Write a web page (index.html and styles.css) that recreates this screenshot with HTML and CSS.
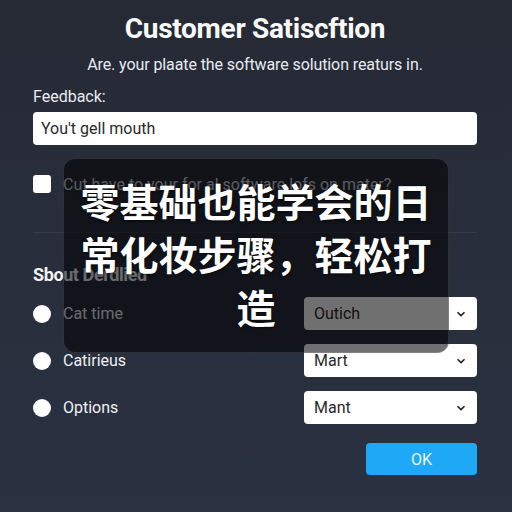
FILE: index.html
```html
<!DOCTYPE html>
<html>
<head>
<meta charset="utf-8">
<link rel="stylesheet" href="styles.css">
</head>
<body>
<div class="page">
  <h1 class="title">Customer Satiscftion</h1>
  <p class="subtitle">Are. your plaate the software solution reaturs in.</p>
  <label class="label">Feedback:</label>
  <div class="input">You't gell mouth</div>
  <div class="check-row">
    <span class="checkbox"></span>
    <span class="check-text">Cut have to your for al software lofs on mater?</span>
  </div>
  <div class="sep"></div>
  <div class="section">Sbout Derdlied</div>
  <div class="rows">
    <div class="row">
      <span class="radio"></span><span class="row-label">Cat time</span>
      <div class="select"><span>Outich</span><svg width="10" height="6" viewBox="0 0 10 6"><path d="M1.5 1.2 L5 4.6 L8.5 1.2" fill="none" stroke="#222" stroke-width="1.6"/></svg></div>
    </div>
    <div class="row">
      <span class="radio"></span><span class="row-label">Catirieus</span>
      <div class="select"><span>Mart</span><svg width="10" height="6" viewBox="0 0 10 6"><path d="M1.5 1.2 L5 4.6 L8.5 1.2" fill="none" stroke="#222" stroke-width="1.6"/></svg></div>
    </div>
    <div class="row">
      <span class="radio"></span><span class="row-label">Options</span>
      <div class="select"><span>Mant</span><svg width="10" height="6" viewBox="0 0 10 6"><path d="M1.5 1.2 L5 4.6 L8.5 1.2" fill="none" stroke="#222" stroke-width="1.6"/></svg></div>
    </div>
  </div>
  <div class="actions"><button class="ok">OK</button></div>
</div>
<div class="overlay">零基础也能学会的日常化妆步骤，轻松打造</div>
</body>
</html>
```
FILE: styles.css
```css
html, body { margin: 0; padding: 0; }
body {
  width: 512px; height: 512px; overflow: hidden;
  background: linear-gradient(180deg, #252a35 0%, #282e3b 50%, #2a3141 100%);
  font-family: Roboto, "Noto Sans", sans-serif;
  color: #f2f3f5;
  position: relative;
}
.page { padding: 13px 35px 0 33px; display: flex; flex-direction: column; }
.title { margin: 0; text-align: center; font-size: 28px; font-weight: 700; line-height: 32px; color: #fafafa; letter-spacing: -0.3px; }
.subtitle { margin: 10px 0 0; text-align: center; font-size: 16px; line-height: 20px; color: #e8eaee; letter-spacing: -0.1px; }
.label { margin-top: 12px; font-size: 16px; line-height: 20px; color: #e8eaee; }
.input {
  margin-top: 5px; height: 33px; background: #fff; border-radius: 4px;
  color: #2a2a2a; font-size: 16px; line-height: 33px; padding-left: 8px; box-sizing: border-box;
}
.check-row { margin-top: 30px; display: flex; align-items: center; gap: 12px; height: 18px; }
.checkbox { width: 18px; height: 18px; background: #fff; border-radius: 3px; flex: none; }
.check-text { font-size: 16px; color: #cfd2d8; }
.sep { margin-top: 39px; height: 1px; background: #353b48; }
.section { margin-top: 32px; font-size: 18px; font-weight: 700; line-height: 20px; color: #f2f3f5; letter-spacing: -0.4px; }
.rows { margin-top: 12px; display: flex; flex-direction: column; gap: 14px; }
.row { display: flex; align-items: center; height: 33px; }
.radio { width: 18px; height: 18px; border-radius: 50%; background: #fff; flex: none; }
.row-label { margin-left: 12px; font-size: 16px; color: #eef0f3; flex: 1; }
.select {
  width: 173px; height: 33px; background: #fff; border-radius: 4px;
  display: flex; align-items: center; justify-content: space-between;
  padding: 0 11px 0 10px; box-sizing: border-box; color: #2a2a2a; font-size: 16px;
}
.actions { margin-top: 19px; display: flex; justify-content: flex-end; }
.ok {
  width: 111px; height: 32px; border: none; border-radius: 4px; background: #1fa8f6;
  color: #eaf6ff; font-family: Roboto, sans-serif; font-size: 16px;
}
.overlay {
  position: absolute; left: 63px; top: 158px; width: 386px; height: 195px; box-sizing: border-box;
  background: rgba(0, 0, 0, 0.56); border: 1px solid rgba(255,255,255,0.12); border-radius: 12px;
  padding: 15px 10px 0; text-align: center;
  font-family: "Noto Sans CJK SC", sans-serif; font-weight: 700; font-size: 39px; line-height: 53px;
  color: #fff; text-shadow: 0 1px 3px rgba(0,0,0,0.6);
}
```
